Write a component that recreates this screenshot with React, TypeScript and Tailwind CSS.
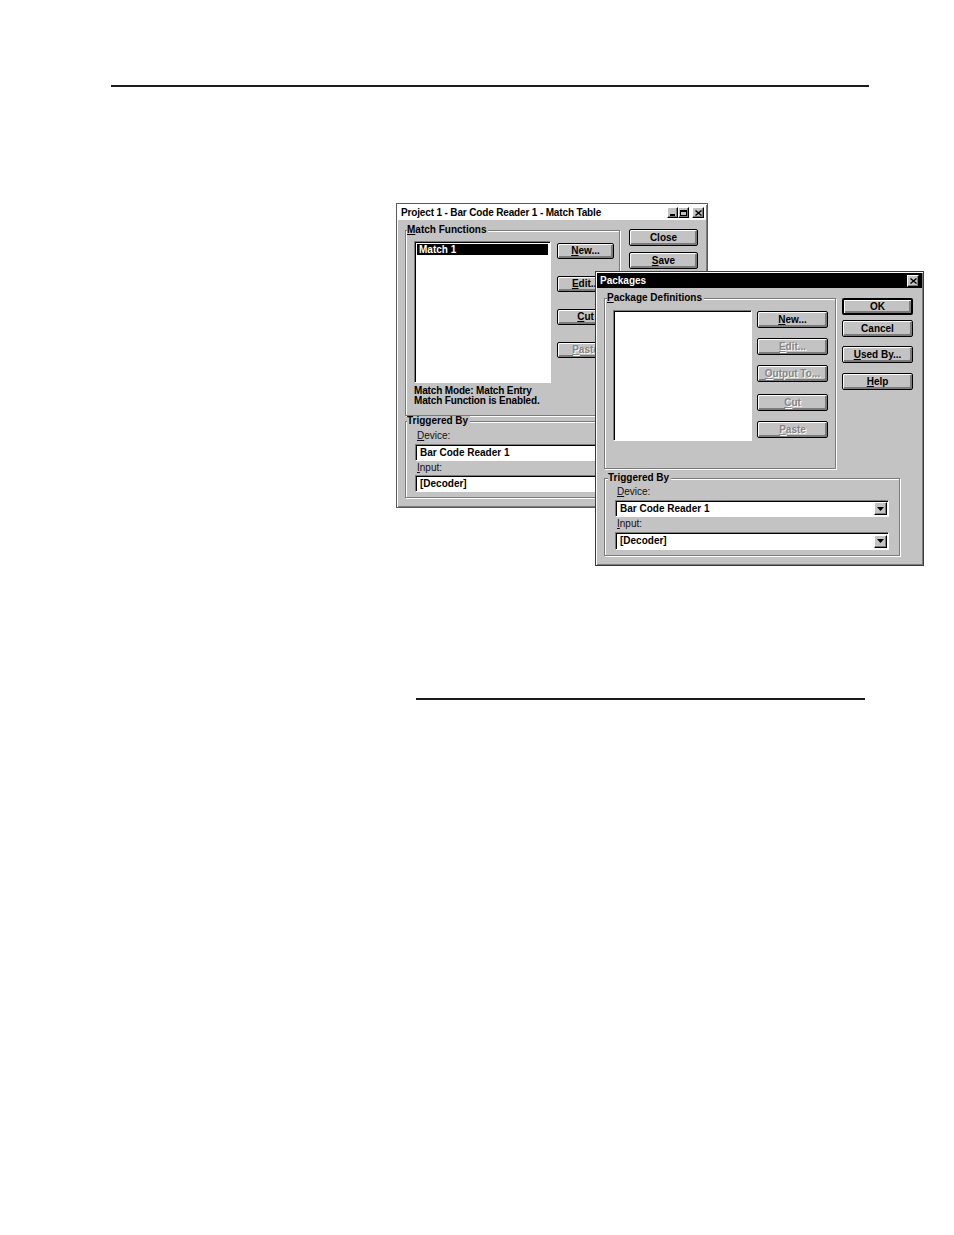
import React from 'react';

type Kids = { children?: React.ReactNode };

// underlined mnemonic letter
const U = ({ children }: Kids) => <span className="underline underline-offset-[1px] decoration-1">{children}</span>;

const Btn = ({
  children,
  className = '',
  disabled = false,
  isDefault = false,
}: Kids & { className?: string; disabled?: boolean; isDefault?: boolean }) => (
  <div
    className={`flex items-center justify-center shrink-0 bg-[#c3c3c3] rounded-[2px] font-bold leading-none ${
      isDefault ? 'border-2 border-black' : 'border border-black'
    } shadow-[inset_1px_1px_0_#ffffff,inset_-1px_-1px_0_#7b7b7b,inset_-2px_-2px_0_#7b7b7b] ${
      disabled ? 'text-[#868686] [text-shadow:1px_1px_0_#ffffff]' : 'text-black'
    } ${className}`}
  >
    {children}
  </div>
);

const Group = ({
  label,
  className = '',
  labelClass = 'left-[1px]',
  children,
}: Kids & { label: React.ReactNode; className?: string; labelClass?: string }) => (
  <div className={`relative shrink-0 border border-[#7b7b7b] shadow-[1px_1px_0_#ffffff,inset_1px_1px_0_#ffffff] ${className}`}>
    <span className={`absolute -top-[6px] ${labelClass} bg-[#c3c3c3] pr-[2px] font-bold leading-[10px]`}>{label}</span>
    {children}
  </div>
);

const Sunken = ({ className = '', children }: Kids & { className?: string }) => (
  <div className={`shrink-0 bg-white border border-t-[#7b7b7b] border-l-[#7b7b7b] border-b-white border-r-white shadow-[inset_1px_1px_0_#000000] ${className}`}>
    {children}
  </div>
);

const Arrow = () => (
  <div className="w-[13px] h-[13px] mr-[1px] flex items-center justify-center bg-[#c3c3c3] border border-t-white border-l-white border-r-black border-b-black shadow-[inset_-1px_-1px_0_#7b7b7b]">
    <svg width="7" height="4" viewBox="0 0 7 4">
      <path d="M0 0h7L3.5 4z" fill="#000" />
    </svg>
  </div>
);

const Combo = ({ value, className = '', arrow = true }: { value: string; className?: string; arrow?: boolean }) => (
  <Sunken className={`flex items-center pl-[4px] font-bold ${className}`}>
    <span className="flex-1 leading-none">{value}</span>
    {arrow && <Arrow />}
  </Sunken>
);

const TitleBtn = ({ children, className = '' }: Kids & { className?: string }) => (
  <div
    className={`h-[11px] flex items-center justify-center bg-[#c3c3c3] border border-t-white border-l-white border-r-black border-b-black shadow-[inset_-1px_-1px_0_#7b7b7b] ${className}`}
  >
    {children}
  </div>
);

const CloseGlyph = () => (
  <svg width="7" height="6" viewBox="0 0 7 6">
    <path d="M0.5 0.5l6 5M6.5 0.5l-6 5" stroke="#000" strokeWidth="1.4" />
  </svg>
);

const MatchTable = () => (
  <div className="absolute left-[396px] top-[116px] w-[312px] h-[305px] bg-[#c3c3c3] border border-[#5a5a5a] shadow-[inset_1px_1px_0_#ffffff,inset_-1px_-1px_0_#7b7b7b] p-[1px] flex flex-col">
    <div className="h-[15px] bg-white flex items-center pl-[3px] pr-[2px] font-bold text-black">
      <span className="flex-1 leading-none tracking-[-0.15px]">Project 1 - Bar Code Reader 1 - Match Table</span>
      <TitleBtn className="w-[11px]">
        <div className="w-[5px] h-[2px] bg-black mt-[5px]" />
      </TitleBtn>
      <TitleBtn className="w-[11px]">
        <div className="w-[7px] h-[6px] border border-black border-t-2" />
      </TitleBtn>
      <TitleBtn className="w-[12px] ml-[3px]">
        <CloseGlyph />
      </TitleBtn>
    </div>

    <div className="flex-1 pl-[7px] pt-[9px]">
      <div className="flex items-start">
        <Group label={<><U>M</U>atch Functions</>} className="mt-[1px] w-[215px] h-[186px] pl-[8px] pt-[10px]">
          <div className="flex items-start">
            <Sunken className="w-[137px] h-[142px] p-[2px]">
              <div className="h-[11px] bg-black text-white font-bold leading-none flex items-center pl-[2px]">Match 1</div>
            </Sunken>
            <div className="ml-[6px] mt-[2px] flex flex-col gap-[17px]">
              <Btn className="w-[57px] h-[16px]">
                <span><U>N</U>ew...</span>
              </Btn>
              <Btn className="w-[57px] h-[16px]">
                <span><U>E</U>dit...</span>
              </Btn>
              <Btn className="w-[57px] h-[16px]">
                <span><U>C</U>ut</span>
              </Btn>
              <Btn className="w-[57px] h-[16px]" disabled>
                <span><U>P</U>aste</span>
              </Btn>
            </div>
          </div>
          <div className="mt-[3px] font-bold leading-[10px] tracking-[-0.15px]">
            <div>Match Mode: Match Entry</div>
            <div>Match Function is Enabled.</div>
          </div>
        </Group>

        <div className="ml-[9px] flex flex-col gap-[6px]">
          <Btn className="w-[69px] h-[17px]">Close</Btn>
          <Btn className="w-[69px] h-[17px]">
            <span><U>S</U>ave</span>
          </Btn>
        </div>
      </div>

      <Group label="Triggered By" className="mt-[5px] w-[293px] h-[77px] pl-[10px] pt-[9px]">
        <div className="ml-[1px] leading-[10px] text-[#111]"><U>D</U>evice:</div>
        <Combo value="Bar Code Reader 1" className="mt-[3px] w-[272px] h-[17px] -ml-[1px]" arrow={false} />
        <div className="ml-[1px] mt-[2px] leading-[10px] text-[#111]"><U>I</U>nput:</div>
        <Combo value="[Decoder]" className="mt-[2px] w-[272px] h-[17px] -ml-[1px]" arrow={false} />
      </Group>
    </div>
  </div>
);

const Packages = () => (
  <div className="absolute left-[595px] top-[184px] w-[329px] h-[295px] bg-[#c3c3c3] border border-[#3a3a3a] shadow-[inset_1px_1px_0_#ffffff,inset_-1px_-1px_0_#7b7b7b] p-[1px] flex flex-col">
    <div className="h-[15px] bg-black flex items-center pl-[3px] pr-[3px] font-bold text-white">
      <span className="flex-1 leading-none">Packages</span>
      <TitleBtn className="w-[12px] h-[12px]">
        <CloseGlyph />
      </TitleBtn>
    </div>

    <div className="flex-1 pl-[7px] pt-[10px]">
      <div className="flex items-start">
        <Group label={<><U>P</U>ackage Definitions</>} labelClass="left-[2px]" className="w-[232px] h-[171px] pl-[8px] pt-[11px]">
          <div className="flex items-start">
            <Sunken className="w-[139px] h-[131px]" />
            <div className="ml-[5px] mt-[1px] flex flex-col">
              <Btn className="w-[71px] h-[17px]">
                <span><U>N</U>ew...</span>
              </Btn>
              <Btn className="w-[71px] h-[17px] mt-[10px]" disabled>
                <span><U>E</U>dit...</span>
              </Btn>
              <Btn className="w-[71px] h-[17px] mt-[10px]" disabled>
                <span><U>O</U>utput To...</span>
              </Btn>
              <Btn className="w-[71px] h-[17px] mt-[12px]" disabled>
                <span><U>C</U>ut</span>
              </Btn>
              <Btn className="w-[71px] h-[17px] mt-[10px]" disabled>
                <span><U>P</U>aste</span>
              </Btn>
            </div>
          </div>
        </Group>

        <div className="ml-[6px] flex flex-col">
          <Btn className="w-[71px] h-[17px]" isDefault>OK</Btn>
          <Btn className="w-[71px] h-[17px] mt-[5px]">Cancel</Btn>
          <Btn className="w-[71px] h-[17px] mt-[9px]">
            <span><U>U</U>sed By...</span>
          </Btn>
          <Btn className="w-[71px] h-[17px] mt-[10px]">
            <span><U>H</U>elp</span>
          </Btn>
        </div>
      </div>

      <Group label="Triggered By" labelClass="left-[3px]" className="mt-[9px] w-[296px] h-[78px] pl-[10px] pt-[8px]">
        <div className="ml-[2px] leading-[10px] text-[#111]"><U>D</U>evice:</div>
        <Combo value="Bar Code Reader 1" className="mt-[3px] w-[274px] h-[17px]" />
        <div className="ml-[2px] mt-[2px] leading-[10px] text-[#111]"><U>I</U>nput:</div>
        <Combo value="[Decoder]" className="mt-[3px] w-[274px] h-[18px]" />
      </Group>
    </div>
  </div>
);

export default function App() {
  return (
    <div className="w-[954px] h-[1235px] bg-white text-black text-[10px] [font-family:'Liberation_Sans',Arial,sans-serif]">
      <div className="pt-[85px] pl-[111px]">
        <div className="w-[758px] h-[2px] bg-[#1c1c1c]" />
      </div>

      <div className="relative h-[611px]">
        <MatchTable />
        <Packages />
      </div>

      <div className="pl-[416px]">
        <div className="w-[449px] h-[2px] bg-[#1c1c1c]" />
      </div>
    </div>
  );
}
